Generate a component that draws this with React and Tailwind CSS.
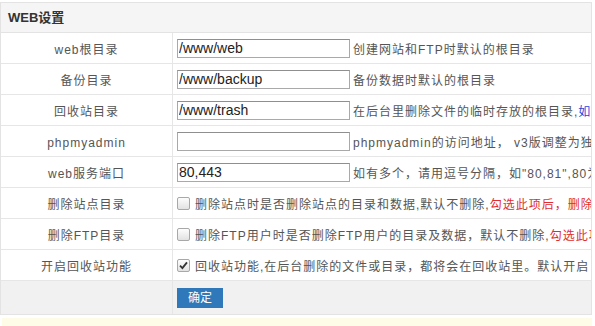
const font = { fontFamily: '"Liberation Sans", "Noto Sans CJK SC", sans-serif' };

const CheckBox = ({ checked }) => (
  <span className="inline-flex h-[13px] w-[13px] shrink-0 items-center justify-center rounded-[2px] border border-[#a8a8a8] bg-gradient-to-b from-[#fdfdfd] to-[#e2e2e2]">
    {checked && (
      <svg viewBox="0 0 12 12" className="h-[11px] w-[11px]">
        <path d="M2.2 6.2 L4.8 8.8 L9.8 2.6" fill="none" stroke="#333" strokeWidth="2" />
      </svg>
    )}
  </span>
);

const rows = [
  {
    label: "web根目录",
    value: "/www/web",
    desc: <>创建网站和FTP时默认的根目录</>,
  },
  {
    label: "备份目录",
    value: "/www/backup",
    desc: <>备份数据时默认的根目录</>,
  },
  {
    label: "回收站目录",
    value: "/www/trash",
    desc: (
      <>
        在后台里删除文件的临时存放的根目录,<span className="text-[#2b45d8]">如需修改请谨慎操作</span>
      </>
    ),
  },
  {
    label: "phpmyadmin",
    value: "",
    desc: <>phpmyadmin的访问地址， v3版调整为独立访问</>,
  },
  {
    label: "web服务端口",
    value: "80,443",
    desc: <>如有多个，请用逗号分隔，如"80,81",80为默认端口</>,
  },
];

const checks = [
  {
    label: "删除站点目录",
    checked: false,
    desc: (
      <>
        删除站点时是否删除站点的目录和数据,默认不删除,<span className="text-[#e02d2d]">勾选此项后，删除站点时将一并删除</span>
      </>
    ),
  },
  {
    label: "删除FTP目录",
    checked: false,
    desc: (
      <>
        删除FTP用户时是否删除FTP用户的目录及数据，默认不删除,<span className="text-[#e02d2d]">勾选此项后，删除FTP时将一并删除</span>
      </>
    ),
  },
  {
    label: "开启回收站功能",
    checked: true,
    desc: <>回收站功能,在后台删除的文件或目录，都将会在回收站里。默认开启</>,
  },
];

export default function App() {
  return (
    <div className="h-[326px] w-[595px] overflow-hidden bg-white pt-[2px]" style={font}>
      <div className="w-[592px] overflow-hidden border border-[#e3e3e3]">
        <div className="flex h-[30px] items-center border-b border-[#e3e3e3] bg-[#f5f5f5] pl-[7px] text-[13px] font-bold text-[#333]">
          WEB设置
        </div>

        {rows.map((r) => (
          <div key={r.label} className="flex h-[31px] border-b border-[#e6e6e6]">
            <div className="flex w-[172px] shrink-0 items-center justify-center border-r border-[#e6e6e6] pt-[3px] text-[12px] tracking-[1px] text-[#555]">
              {r.label}
            </div>
            <div className="flex items-center whitespace-nowrap pl-[4px]">
              <input
                readOnly
                value={r.value}
                className="h-[19px] w-[173px] shrink-0 border border-[#a9a9a9] border-t-[#8f8f8f] px-[1px] text-[14px] leading-none text-[#222] outline-none"
                style={font}
              />
              <span className="ml-[3px] pt-[3px] text-[12px] tracking-[1px] text-[#555]">{r.desc}</span>
            </div>
          </div>
        ))}

        {checks.map((c) => (
          <div key={c.label} className="flex h-[31px] border-b border-[#e6e6e6]">
            <div className="flex w-[172px] shrink-0 items-center justify-center border-r border-[#e6e6e6] pt-[3px] text-[12px] tracking-[1px] text-[#555]">
              {c.label}
            </div>
            <div className="flex items-center gap-[5px] whitespace-nowrap pl-[4px]">
              <CheckBox checked={c.checked} />
              <span className="pt-[3px] text-[12px] tracking-[1px] text-[#555]">{c.desc}</span>
            </div>
          </div>
        ))}

        <div className="flex h-[33px] bg-[#f1f1f1]">
          <div className="w-[172px] shrink-0 border-r border-[#e6e6e6]" />
          <div className="flex items-center pl-[4px]">
            <button className="flex h-[20px] w-[46px] items-center justify-center bg-[#2f78b9] text-[12px] text-white">
              确定
            </button>
          </div>
        </div>
      </div>

      <div className="mt-[3px] ml-[2px] h-[40px] w-[590px] bg-[#fefbe6] pl-[40px] pt-[6px] text-[12px] text-[#777]">
        · 提示
      </div>
    </div>
  );
}
